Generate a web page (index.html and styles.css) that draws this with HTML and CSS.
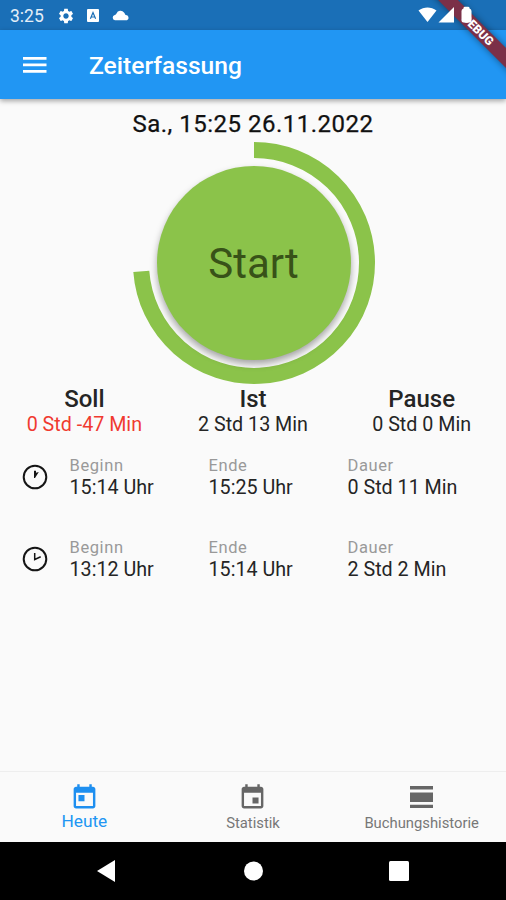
FILE: index.html
```html
<!DOCTYPE html>
<html lang="de">
<head>
    <meta charset="UTF-8">
    <meta name="viewport" content="width=device-width, initial-scale=1.0">
    <title>Zeiterfassung</title>
    <link rel="stylesheet" href="styles.css">
</head>
<body>
    <!-- Status bar -->
    <div class="status-bar">
        <span class="clock">3:25</span>
        <svg class="icon-gear" width="18" height="18" viewBox="0 0 24 24" fill="#fff"><path d="M19.14 12.94c.04-.3.06-.61.06-.94 0-.32-.02-.64-.07-.94l2.03-1.58c.18-.14.23-.41.12-.61l-1.92-3.32c-.12-.22-.37-.29-.59-.22l-2.39.96c-.5-.38-1.03-.7-1.62-.94l-.36-2.54c-.04-.24-.24-.41-.48-.41h-3.84c-.24 0-.43.17-.47.41l-.36 2.54c-.59.24-1.13.57-1.62.94l-2.39-.96c-.22-.08-.47 0-.59.22L2.74 8.87c-.12.21-.08.47.12.61l2.03 1.58c-.05.3-.09.63-.09.94s.02.64.07.94l-2.03 1.58c-.18.14-.23.41-.12.61l1.92 3.32c.12.22.37.29.59.22l2.39-.96c.5.38 1.03.7 1.62.94l.36 2.54c.05.24.24.41.48.41h3.84c.24 0 .44-.17.47-.41l.36-2.54c.59-.24 1.13-.56 1.62-.94l2.39.96c.22.08.47 0 .59-.22l1.92-3.32c.12-.22.07-.47-.12-.61l-2.01-1.58zM12 15.6c-1.98 0-3.6-1.62-3.6-3.6s1.62-3.6 3.6-3.6 3.6 1.62 3.6 3.6-1.62 3.6-3.6 3.6z"/></svg>
        <svg class="icon-a" width="12" height="13" viewBox="0 0 12 13"><rect width="12" height="13" rx="1" fill="#fff"/><path d="M3.4 9.8L6 3.6l2.6 6.2M4.4 8h3.2" fill="none" stroke="#1a6eb5" stroke-width="1.2"/></svg>
        <svg class="icon-cloud" width="18" height="12" viewBox="0 0 18 12" fill="#fff"><path d="M3 11.300a2.700 2.700 0 0 1-.2-5.300Q4 5.500 4.500 4.500A4.300 4.300 0 0 1 12 3.500Q13 4.500 13.500 6a2.800 2.800 0 0 1 1.500 5.300z"/></svg>
        <svg class="icon-signal" width="56" height="18" viewBox="0 0 56 18" fill="#fff"><path d="M.5 4.500C6 .5 13 .5 18.500 4.500L9.500 16z"/><path d="M20.500 16.500L36 1v15.500z"/><path d="M43.500 5q0-2 2-2.500V2q0-1.300 1.500-1.300h3Q51.500.7 51.500 2v.5q2 .5 2 2.500v9.500q0 2-2 2h-6q-2 0-2-2z"/></svg>
    </div>

    <!-- App bar -->
    <header class="app-bar">
        <svg class="menu" width="24" height="16" viewBox="0 0 24 16" fill="#fff"><path d="M0 0h23.500v2.700H0zM0 6.500h23.500v2.700H0zM0 13h23.500v2.700H0z"/></svg>
        <h1>Zeiterfassung</h1>
    </header>

    <div class="debug-corner"><div class="debug-banner">DEBUG</div></div>

    <main>
        <div class="date">Sa., 15:25 26.11.2022</div>

        <div class="timer">
            <svg class="ring" width="242" height="242" viewBox="0 0 242 242"><path d="M121 8A113 113 0 1 1 8.300 129.300" fill="none" stroke="#8bc34a" stroke-width="16"/></svg>
            <button class="start">Start</button>
        </div>

        <div class="summary">
            <div><h2>Soll</h2><p class="negative">0 Std -47 Min</p></div>
            <div><h2>Ist</h2><p>2 Std 13 Min</p></div>
            <div><h2>Pause</h2><p>0 Std 0 Min</p></div>
        </div>

        <div class="entry">
            <svg width="26" height="26" viewBox="0 0 26 26"><circle cx="13" cy="13" r="11.300" fill="none" stroke="#151515" stroke-width="2"/><path d="M12 6.800h2v2L16.800 8 13 14h-1z" fill="#151515"/></svg>
            <div><label>Beginn</label><span>15:14 Uhr</span></div>
            <div><label>Ende</label><span>15:25 Uhr</span></div>
            <div><label>Dauer</label><span>0 Std 11 Min</span></div>
        </div>
        <div class="entry">
            <svg width="26" height="26" viewBox="0 0 26 26"><circle cx="13" cy="13" r="11.300" fill="none" stroke="#151515" stroke-width="2"/><path d="M12.700 7v6.500l6-2.700" fill="none" stroke="#151515" stroke-width="1.500"/></svg>
            <div><label>Beginn</label><span>13:12 Uhr</span></div>
            <div><label>Ende</label><span>15:14 Uhr</span></div>
            <div><label>Dauer</label><span>2 Std 2 Min</span></div>
        </div>
    </main>

    <!-- Bottom navigation -->
    <nav class="tabs">
        <div class="tab active">
            <svg width="29" height="29" viewBox="0 0 24 24" fill="currentColor"><path d="M19 3h-1V1h-2v2H8V1H6v2H5c-1.110 0-1.990.9-1.990 2L3 19c0 1.100.890 2 2 2h14c1.100 0 2-.9 2-2V5c0-1.100-.9-2-2-2zm0 16H5V8h14v11zM7 10h5v5H7z"/></svg>
            <span>Heute</span>
        </div>
        <div class="tab">
            <svg width="29" height="29" viewBox="0 0 24 24" fill="currentColor"><path d="M17 12h-5v5h5v-5zM16 1v2H8V1H6v2H5c-1.110 0-1.990.9-1.990 2L3 19c0 1.100.890 2 2 2h14c1.100 0 2-.9 2-2V5c0-1.100-.9-2-2-2h-1V1h-2zm3 18H5V8h14v11z"/></svg>
            <span>Statistik</span>
        </div>
        <div class="tab">
            <svg width="31" height="29" viewBox="0 0 31 29" fill="currentColor"><path d="M4 3h23v3.500H4zM4 9.500h23v9.500H4zM4 21.700h23v3.300H4z"/></svg>
            <span>Buchungshistorie</span>
        </div>
    </nav>

    <!-- Android system buttons -->
    <div class="system-bar">
        <svg width="18" height="22" viewBox="0 0 18 22" fill="#fff"><path d="M0 11L18 0v22z"/></svg>
        <svg width="20" height="20" viewBox="0 0 20 20" fill="#fff"><circle cx="11.500" cy="10" r="9.500"/></svg>
        <svg width="20" height="20" viewBox="0 0 20 20" fill="#fff"><rect width="20" height="20" rx="1.500"/></svg>
    </div>
</body>
</html>
```
FILE: styles.css
```css
* {
    box-sizing: border-box;
}
body {
    font-family: Roboto, sans-serif;
    margin: 0;
    height: 900px;
    display: flex;
    flex-direction: column;
    overflow: hidden;
    position: relative;
    background: #fafafa;
    color: #252525;
}
h1, h2, p {
    margin: 0;
}
svg {
    display: block;
    flex-shrink: 0;
    overflow: visible;
}
.status-bar {
    height: 30px;
    padding: 2px 32px 0 10px;
    display: flex;
    align-items: center;
    background: #1a6fb7;
    color: #e4eef7;
}
.clock {
    width: 47px;
    font-size: 17.5px;
}
.icon-a {
    margin-left: 12px;
    margin-top: -1px;
}
.icon-cloud {
    margin-left: 13px;
    margin-top: -3px;
}
.icon-signal {
    margin-left: auto;
    margin-top: -2px;
    position: relative;
    z-index: 3;
}
.app-bar {
    height: 69px;
    padding: 2px 0 0 23px;
    display: flex;
    align-items: center;
    background: #2196f3;
    box-shadow: 0 2px 5px rgba(0, 0, 0, 0.35);
    color: #fff;
}
.app-bar .menu {
    margin-top: -1px;
}
.app-bar h1 {
    margin-left: 42px;
    font-size: 24.6px;
    font-weight: 500;
}
.debug-corner {
    position: absolute;
    top: 0;
    right: 0;
    width: 90px;
    height: 90px;
    overflow: hidden;
}
.debug-banner {
    position: absolute;
    left: -8px;
    top: 23px;
    width: 140px;
    height: 14px;
    line-height: 14px;
    transform: rotate(45deg);
    background: #7b3048;
    box-shadow: 0 0 7px rgba(0, 0, 0, 0.45);
    color: #fff;
    font-size: 12px;
    font-weight: 900;
    text-align: center;
}
main {
    flex: 1;
}
.date {
    padding-top: 10px;
    height: 43px;
    line-height: 30px;
    font-size: 24px;
    letter-spacing: 0.5px;
    color: #111;
    -webkit-text-stroke: 0.25px #111;
    text-align: center;
}
.timer {
    display: grid;
    place-items: center;
    height: 242px;
    padding-left: 2px;
}
.ring, .start {
    grid-area: 1 / 1;
}
.start {
    width: 194px;
    height: 194px;
    padding: 0 1px 0 0;
    border: none;
    border-radius: 50%;
    background: #8bc34a;
    box-shadow: 0 4px 7px rgba(0, 0, 0, 0.35);
    color: #385218;
    font-family: inherit;
    font-size: 42px;
}
.summary {
    display: grid;
    grid-template-columns: repeat(3, 1fr);
    height: 66px;
    padding-top: 1px;
    text-align: center;
}
.summary h2 {
    font-size: 24px;
    line-height: 29px;
    font-weight: 500;
}
.summary p {
    font-size: 19.7px;
    line-height: 22px;
}
.summary .negative {
    color: #f03a30;
}
.entry {
    display: grid;
    grid-template-columns: 47.5px 139px 139px 1fr;
    padding: 6px 0 0 22px;
    height: 82px;
}
.entry svg {
    margin-top: 8px;
}
.entry label {
    display: block;
    font-size: 16.5px;
    line-height: 20px;
    letter-spacing: 0.6px;
    color: #999;
}
.entry span {
    display: block;
    font-size: 19.7px;
    line-height: 24px;
}
.tabs {
    display: grid;
    grid-template-columns: repeat(3, 1fr);
    height: 71px;
    border-top: 1px solid #eee;
}
.tab {
    display: flex;
    flex-direction: column;
    align-items: center;
    padding-top: 11px;
    color: #666;
    font-size: 14.8px;
}
.tab span {
    line-height: 20px;
    margin-top: 1px;
    color: #777;
}
.active {
    color: #1e8ff0;
}
.tab.active span {
    margin-top: -1px;
    font-size: 17.3px;
    color: #2196f3;
}
.system-bar {
    height: 58px;
    padding: 0 97px;
    display: flex;
    align-items: center;
    justify-content: space-between;
    background: #000;
}
```
